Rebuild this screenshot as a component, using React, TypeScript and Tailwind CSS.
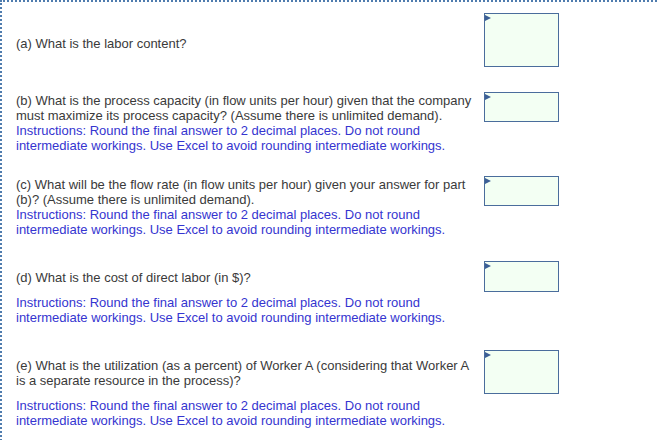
import React from 'react';

const instr =
  'Instructions: Round the final answer to 2 decimal places. Do not round intermediate workings. Use Excel to avoid rounding intermediate workings.';

type Part = {
  question: string;
  boxH: string;
  rowMt: string;
  textMt: string;
  showInstr: boolean;
  gap: boolean;
};

const parts: Part[] = [
  { question: '(a) What is the labor content?', boxH: 'h-[54px]', rowMt: 'mt-[11px]', textMt: 'mt-[23px]', showInstr: false, gap: false },
  {
    question:
      '(b) What is the process capacity (in flow units per hour) given that the company must maximize its process capacity? (Assume there is unlimited demand).',
    boxH: 'h-[30px]',
    rowMt: 'mt-[25px]',
    textMt: 'mt-[1px]',
    showInstr: true,
    gap: false,
  },
  {
    question:
      '(c) What will be the flow rate (in flow units per hour) given your answer for part (b)? (Assume there is unlimited demand).',
    boxH: 'h-[30px]',
    rowMt: 'mt-[23px]',
    textMt: 'mt-[1px]',
    showInstr: true,
    gap: false,
  },
  {
    question: '(d) What is the cost of direct labor (in $)?',
    boxH: 'h-[31px]',
    rowMt: 'mt-[24px]',
    textMt: 'mt-[9px]',
    showInstr: true,
    gap: true,
  },
  {
    question:
      '(e) What is the utilization (as a percent) of Worker A (considering that Worker A is a separate resource in the process)?',
    boxH: 'h-[44px]',
    rowMt: 'mt-[25px]',
    textMt: 'mt-[8px]',
    showInstr: true,
    gap: true,
  },
];

function AnswerBox({ h }: { h: string }) {
  return (
    <div className={`relative w-[75px] ${h} shrink-0 border border-[#4a6d9c] bg-[#f3fff3]`}>
      <div className="absolute left-0 top-[1px] w-0 h-0 border-y-[3px] border-y-transparent border-l-[6px] border-l-[#3c5f96]" />
    </div>
  );
}

export default function App() {
  return (
    <div
      className="w-[720px] h-[460px] bg-white border-l-2 border-t-2 border-dotted border-[#4f7cae] text-[13px] leading-[15px]"
      style={{ fontFamily: '"Liberation Sans", Arial, sans-serif' }}
    >
      {parts.map((p, i) => (
        <div key={i} className={`flex items-start ${p.rowMt}`}>
          <div className={`w-[482px] pl-[14px] pr-[8px] ${p.textMt}`}>
            <div className="text-[#3a3a3a]">{p.question}</div>
            {p.showInstr && (
              <div className={`text-[#3535d0] ${p.gap ? 'mt-[10px]' : ''}`}>{instr}</div>
            )}
          </div>
          <AnswerBox h={p.boxH} />
        </div>
      ))}
    </div>
  );
}
